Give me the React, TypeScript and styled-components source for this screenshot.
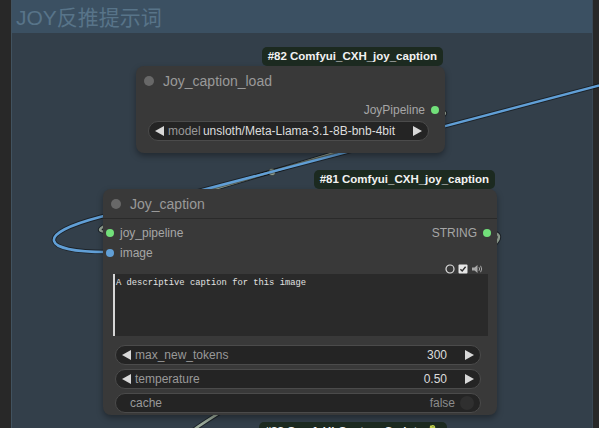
import React from "react";
import styled, { createGlobalStyle } from "styled-components";

const GlobalStyle = createGlobalStyle`
  *, *::before, *::after {
    box-sizing: border-box;
  }
  html, body {
    margin: 0;
    padding: 0;
    background: #282828;
    overflow: hidden;
  }
`;

const Canvas = styled.div`
  position: relative;
  width: 599px;
  height: 428px;
  overflow: hidden;
  background: #282828;
  font-family: "Liberation Sans", Arial, sans-serif;
`;

const Group = styled.div`
  position: absolute;
  left: 11px;
  top: 0;
  width: 582px;
  height: 460px;
  display: flex;
  flex-direction: column;
  background: #333f4a;
  border-left: 1px solid #41525f;
  border-right: 1px solid #3a4855;
`;

const GroupHeader = styled.div`
  height: 33px;
  flex: none;
  display: flex;
  align-items: center;
  padding: 0 0 2px 4px;
  background: #3b5062;
  color: #587489;
  font-size: 21px;
  font-family: "Liberation Sans", "Noto Sans CJK SC", sans-serif;
`;

const Links = styled.svg`
  position: absolute;
  left: 0;
  top: 0;
`;

const NodeBox = styled.div<{ $x: number; $y: number; $w: number; $h: number }>`
  position: absolute;
  left: ${({ $x }) => $x}px;
  top: ${({ $y }) => $y}px;
  width: ${({ $w }) => $w}px;
  height: ${({ $h }) => $h}px;
  display: flex;
  flex-direction: column;
  background: #393939;
  border-radius: 8px;
  box-shadow: 0 3px 6px rgba(0, 0, 0, 0.35);
`;

const Badge = styled.div`
  position: absolute;
  right: 2px;
  bottom: 100%;
  height: 19px;
  padding: 0 6px;
  border-radius: 5px;
  background: #1c2a20;
  color: #f2f2f2;
  font-size: 11.5px;
  font-weight: bold;
  line-height: 19px;
  white-space: nowrap;
`;

const TitleBar = styled.div<{ $divider?: boolean }>`
  height: 30px;
  flex: none;
  display: flex;
  align-items: center;
  gap: 9px;
  padding-left: 8px;
  border-bottom: 1px solid ${({ $divider }) => ($divider ? "#2a2a2a" : "transparent")};
  color: #999;
  font-size: 14px;
`;

const TitleDot = styled.span`
  width: 10px;
  height: 10px;
  border-radius: 50%;
  background: #686868;
`;

const SlotList = styled.div`
  padding-top: 4px;
  display: flex;
  flex-direction: column;
`;

const SlotRow = styled.div`
  height: 20px;
  display: flex;
  align-items: center;
  justify-content: space-between;
  padding: 0 6px 0 3px;
`;

const Slot = styled.div`
  display: flex;
  align-items: center;
  gap: 6px;
  color: #a6a6a6;
  font-size: 12px;
`;

const SlotDot = styled.span<{ $color: string }>`
  width: 8px;
  height: 8px;
  border-radius: 50%;
  background: ${({ $color }) => $color};
`;

const Widget = styled.div<{ $top?: number }>`
  height: 20px;
  flex: none;
  margin: ${({ $top }) => $top ?? 4}px 16px 0 12px;
  padding: 0 6px;
  display: flex;
  align-items: center;
  border-radius: 10px;
  background: #242424;
  border: 1px solid #4b4b4b;
  font-size: 12px;
  white-space: nowrap;
`;

const WidgetLabel = styled.span<{ $pad?: number }>`
  margin-left: ${({ $pad }) => $pad ?? 4}px;
  color: #999;
`;

const WidgetValue = styled.span<{ $dim?: boolean }>`
  margin-left: auto;
  margin-right: 18px;
  color: ${({ $dim }) => ($dim ? "#8c8c8c" : "#dcdcdc")};
`;

const ToggleValue = styled.span`
  margin-left: auto;
  color: #8c8c8c;
`;

const ToggleKnob = styled.span`
  width: 14px;
  height: 14px;
  margin-left: 5px;
  border-radius: 50%;
  background: #2f2f2f;
`;

const IconRow = styled.div`
  height: 10px;
  margin: 1px 14px 0 0;
  display: flex;
  align-items: center;
  justify-content: flex-end;
  gap: 3px;
`;

const TextArea = styled.div`
  height: 62px;
  flex: none;
  margin: 0 9px 0 10px;
  padding: 4px 1px;
  background: #2a2a2a;
  border-left: 2px solid #d6d6d6;
  color: #e2e2e2;
  font-family: "Liberation Mono", "DejaVu Sans Mono", monospace;
  font-size: 8.8px;
  line-height: 10px;
  white-space: pre;
`;

const WidgetStack = styled.div`
  margin-top: 5px;
  display: flex;
  flex-direction: column;
`;

const ArrowLeft = () => (
  <svg width="9" height="10" viewBox="0 0 9 10">
    <polygon points="9,0 9,10 0,5" fill="#d8d8d8" />
  </svg>
);

const ArrowRight = () => (
  <svg width="9" height="10" viewBox="0 0 9 10">
    <polygon points="0,0 0,10 9,5" fill="#d8d8d8" />
  </svg>
);

type NumberWidgetProps = {
  label: string;
  value: string;
  top?: number;
};

const NumberWidget = ({ label, value, top }: NumberWidgetProps) => (
  <Widget $top={top}>
    <ArrowLeft />
    <WidgetLabel>{label}</WidgetLabel>
    <WidgetValue>{value}</WidgetValue>
    <ArrowRight />
  </Widget>
);

const LinkPath = ({ d, color }: { d: string; color: string }) => (
  <>
    <path d={d} fill="none" stroke="rgba(0,0,0,0.45)" strokeWidth={4.5} />
    <path d={d} fill="none" stroke={color} strokeWidth={2.5} />
  </>
);

const IMAGE_BLUE = "#619fd6";
const DEFAULT_LINK = "#9aa99a";
const SLOT_GREEN = "#72e07a";

const App = () => {
  return (
    <>
      <GlobalStyle />
      <Canvas>
        <Group>
          <GroupHeader>JOY反推提示词</GroupHeader>
        </Group>

        <Links width="599" height="428" viewBox="0 0 599 428">
          <LinkPath d="M 487 232 C 581 232, 86 460, 180 460" color={DEFAULT_LINK} />
          <LinkPath d="M 435 111 C 520 111, 25 232, 110 232" color={DEFAULT_LINK} />
          <circle cx="272" cy="172" r="3.5" fill={DEFAULT_LINK} stroke="rgba(0,0,0,0.4)" />
          <LinkPath d="M 620 80 L 100 217 C 35 234, 40 252, 107 252" color={IMAGE_BLUE} />
        </Links>

        <NodeBox $x={136} $y={66} $w={309} $h={87}>
          <Badge>#82 Comfyui_CXH_joy_caption</Badge>
          <TitleBar>
            <TitleDot />
            Joy_caption_load
          </TitleBar>
          <SlotList>
            <SlotRow>
              <span />
              <Slot>
                JoyPipeline
                <SlotDot $color={SLOT_GREEN} />
              </Slot>
            </SlotRow>
          </SlotList>
          <Widget $top={1}>
            <ArrowLeft />
            <WidgetLabel>model</WidgetLabel>
            <WidgetValue>unsloth/Meta-Llama-3.1-8B-bnb-4bit</WidgetValue>
            <ArrowRight />
          </Widget>
        </NodeBox>

        <NodeBox $x={103} $y={189} $w={394} $h={226}>
          <Badge>#81 Comfyui_CXH_joy_caption</Badge>
          <TitleBar $divider>
            <TitleDot />
            Joy_caption
          </TitleBar>
          <SlotList>
            <SlotRow>
              <Slot>
                <SlotDot $color={SLOT_GREEN} />
                joy_pipeline
              </Slot>
              <Slot>
                STRING
                <SlotDot $color={SLOT_GREEN} />
              </Slot>
            </SlotRow>
            <SlotRow>
              <Slot>
                <SlotDot $color={IMAGE_BLUE} />
                image
              </Slot>
            </SlotRow>
          </SlotList>
          <IconRow>
            <svg width="10" height="10" viewBox="0 0 10 10">
              <circle cx="5" cy="5" r="4" fill="none" stroke="#dedede" strokeWidth="1.2" />
            </svg>
            <svg width="10" height="10" viewBox="0 0 10 10">
              <rect x="0.5" y="0.5" width="9" height="9" rx="1" fill="#e6e6e6" />
              <path d="M 2.4 5.2 L 4.2 7 L 7.6 2.8" fill="none" stroke="#303030" strokeWidth="1.4" />
            </svg>
            <svg width="12" height="10" viewBox="0 0 12 10">
              <path d="M 1 3.5 H 3.5 L 6.5 1 V 9 L 3.5 6.5 H 1 Z" fill="#a8a8a8" />
              <path d="M 8 3.2 Q 9.3 5 8 6.8 M 9.6 1.8 Q 11.8 5 9.6 8.2" fill="none" stroke="#a8a8a8" strokeWidth="1" />
            </svg>
          </IconRow>
          <TextArea>A descriptive caption for this image</TextArea>
          <WidgetStack>
            <NumberWidget label="max_new_tokens" value="300" top={4} />
            <NumberWidget label="temperature" value="0.50" />
            <Widget>
              <WidgetLabel $pad={8}>cache</WidgetLabel>
              <ToggleValue>false</ToggleValue>
              <ToggleKnob />
            </Widget>
          </WidgetStack>
        </NodeBox>

        <NodeBox $x={263} $y={441} $w={186} $h={60}>
          <Badge>#83 ComfyUI-Custom-Scripts 🐍</Badge>
        </NodeBox>
      </Canvas>
    </>
  );
};

export default App;
